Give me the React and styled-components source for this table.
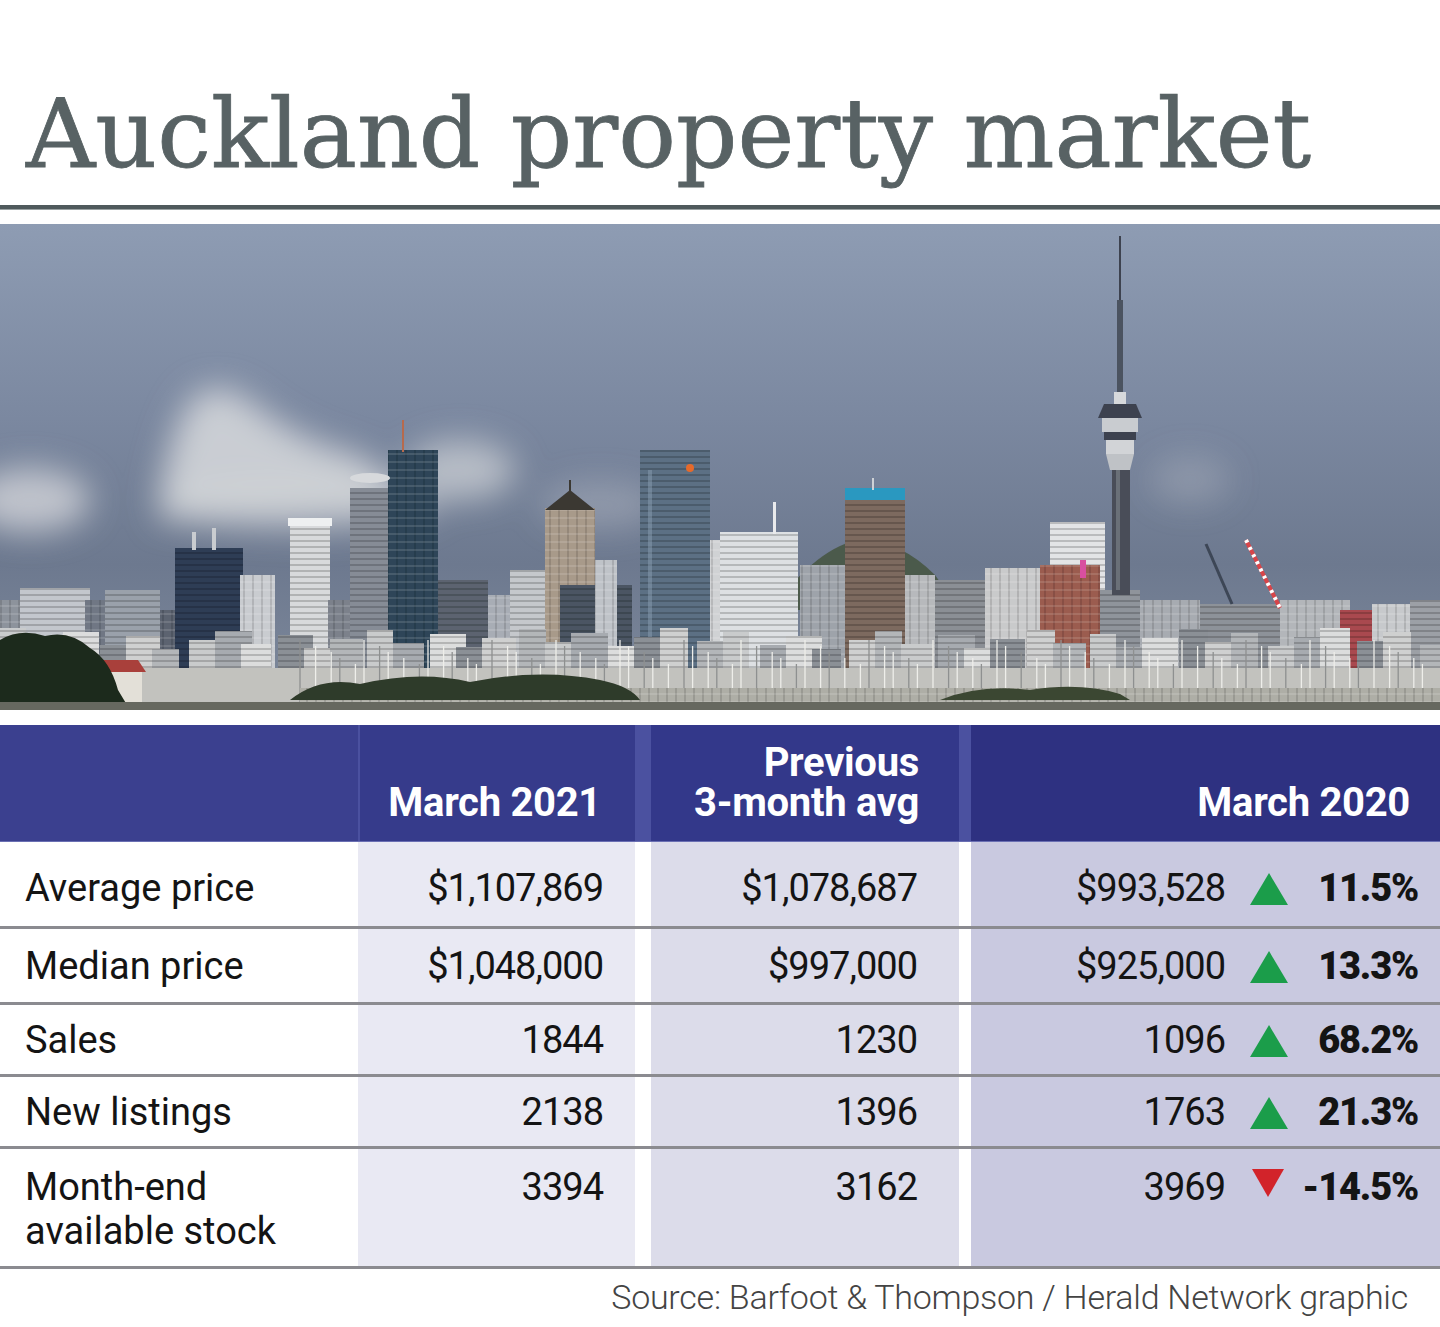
import React from 'react';
import styled, { createGlobalStyle } from 'styled-components';

const GlobalStyle = createGlobalStyle`
  html, body {
    margin: 0;
    padding: 0;
    background: #ffffff;
  }
  body {
    font-family: Roboto, "Liberation Sans", Arial, sans-serif;
    color: #111;
  }
`;

const rows = [
  { label: ['Average price'], now: '$1,107,869', avg: '$1,078,687', prev: '$993,528', change: '11.5%', up: true, height: 84, pad: 8 },
  { label: ['Median price'], now: '$1,048,000', avg: '$997,000', prev: '$925,000', change: '13.3%', up: true, height: 73, pad: 0 },
  { label: ['Sales'], now: '1844', avg: '1230', prev: '1096', change: '68.2%', up: true, height: 69, pad: 0 },
  { label: ['New listings'], now: '2138', avg: '1396', prev: '1763', change: '21.3%', up: true, height: 69, pad: 0 },
  { label: ['Month-end', 'available stock'], now: '3394', avg: '3162', prev: '3969', change: '-14.5%', up: false, height: 117, pad: 16, top: true },
];

// skyline drawing data, page coordinates (x, top, width, colour)
const towers = [
  [0, 600, 60, '#8d939c'], [20, 588, 70, '#c3c7cd'], [85, 600, 40, '#6f7784'],
  [105, 590, 55, '#9aa1ab'], [160, 610, 20, '#5b6370'], [175, 548, 68, '#2f3e55'],
  [240, 575, 35, '#c9ccd0'], [290, 522, 40, '#d8dadc'], [328, 600, 25, '#7b818b'],
  [350, 488, 38, '#868c96'], [388, 450, 50, '#2e4458'], [438, 580, 50, '#5b6470'],
  [488, 595, 30, '#a8adb5'], [510, 570, 35, '#c5c8cc'], [545, 508, 50, '#a89a8a'],
  [560, 585, 72, '#4b5563'], [595, 560, 22, '#bfc3c8'], [640, 450, 70, '#5c7084'],
  [710, 540, 14, '#d0d2d4'], [720, 532, 78, '#dde0e3'], [800, 565, 45, '#9ea3aa'],
  [845, 492, 60, '#7d6a5e'], [905, 575, 30, '#b7b9bc'], [935, 580, 50, '#8b8f95'],
  [985, 568, 55, '#c9cacb'], [1050, 522, 55, '#e3e4e6'], [1040, 565, 60, '#9b5b4f'],
  [1100, 590, 40, '#8f949b'], [1140, 600, 60, '#a7abb1'], [1200, 604, 80, '#8d9299'],
  [1280, 600, 70, '#b3b6ba'], [1340, 610, 32, '#a94a4f'], [1372, 604, 40, '#c7c9cc'],
  [1410, 600, 30, '#9ca0a6'],
];

const lowBlocks = Array.from({ length: 48 }, (_, i) => {
  const x = i * 30 + ((i * 7) % 11);
  const top = 628 + ((i * 13) % 22);
  const shades = ['#c9cbcc', '#a7abb0', '#dcdddd', '#8b9096', '#cfd0d0', '#b3b6b9'];
  return [x, top, 26 + ((i * 5) % 12), shades[i % shades.length]];
});

const masts = Array.from({ length: 90 }, (_, i) => 300 + i * 12.6 + ((i * 17) % 7));

function Skyline() {
  return (
    <svg viewBox="0 224 1440 486" width="1440" height="486" preserveAspectRatio="none">
      <defs>
        <linearGradient id="sky" x1="0" y1="0" x2="0" y2="1">
          <stop offset="0" stopColor="#8e9cb3" />
          <stop offset="0.4" stopColor="#7b88a0" />
          <stop offset="0.7" stopColor="#6d798f" />
          <stop offset="1" stopColor="#7f8a9c" />
        </linearGradient>
        <filter id="soft" x="-50%" y="-50%" width="200%" height="200%">
          <feGaussianBlur stdDeviation="16" />
        </filter>
        <filter id="haze" x="-10%" y="-10%" width="120%" height="120%">
          <feGaussianBlur stdDeviation="0.7" />
        </filter>
        <pattern id="floors" width="6" height="6" patternUnits="userSpaceOnUse">
          <rect width="6" height="2" fill="#000" fillOpacity="0.18" />
        </pattern>
        <pattern id="cols" width="9" height="8" patternUnits="userSpaceOnUse">
          <rect width="2" height="8" fill="#000" fillOpacity="0.12" />
          <rect y="5" width="9" height="2" fill="#fff" fillOpacity="0.12" />
        </pattern>
      </defs>

      <rect x="0" y="224" width="1440" height="486" fill="url(#sky)" />

      <g filter="url(#soft)" fill="#d3d5d9">
        <path d="M160 490 Q175 410 200 392 Q225 380 255 405 Q300 440 350 452 Q395 468 405 510 L160 520 Z" opacity="0.9" />
        <ellipse cx="30" cy="500" rx="60" ry="32" opacity="0.8" />
        <ellipse cx="460" cy="470" rx="55" ry="30" opacity="0.7" />
        <ellipse cx="300" cy="505" rx="140" ry="26" opacity="0.55" />
        <ellipse cx="600" cy="505" rx="60" ry="24" opacity="0.3" />
        <ellipse cx="1190" cy="480" rx="40" ry="24" opacity="0.25" />
      </g>

      <g filter="url(#haze)">
        <path d="M770 610 Q820 545 860 540 Q900 540 935 575 L960 610 Z" fill="#4c5a4c" />

        {towers.map(([x, top, w, c], i) => (
          <g key={i}>
            <rect x={x} y={top} width={w} height={700 - top} fill={c} />
            <rect x={x} y={top} width={w} height={700 - top} fill={i % 2 ? 'url(#floors)' : 'url(#cols)'} />
          </g>
        ))}

        {/* tower details */}
        <rect x="192" y="532" width="4" height="18" fill="#c9ccd0" />
        <rect x="212" y="528" width="4" height="22" fill="#c9ccd0" />
        <rect x="288" y="518" width="44" height="8" fill="#eef0f1" />
        <ellipse cx="370" cy="478" rx="20" ry="5" fill="#d7d9dc" />
        <rect x="402" y="420" width="2" height="32" fill="#b66a4e" />
        <polygon points="545,510 570,490 595,510" fill="#3b3733" />
        <rect x="569" y="480" width="2" height="14" fill="#3b3733" />
        <rect x="648" y="470" width="4" height="180" fill="#889bb0" opacity="0.5" />
        <circle cx="690" cy="468" r="4" fill="#e66a2c" />
        <rect x="845" y="488" width="60" height="12" fill="#2a98c0" />
        <rect x="872" y="478" width="2" height="12" fill="#cfd2d6" />
        <rect x="773" y="502" width="3" height="32" fill="#e9eaec" />
        <rect x="1080" y="560" width="6" height="18" fill="#d84fa0" />

        {/* sky tower */}
        <rect x="1119" y="236" width="2" height="70" fill="#3c4250" />
        <rect x="1117" y="300" width="6" height="100" fill="#4c5260" />
        <rect x="1114" y="392" width="12" height="12" fill="#d7d9dc" />
        <path d="M1104 404 L1136 404 L1142 418 L1098 418 Z" fill="#3d4350" />
        <rect x="1102" y="418" width="36" height="14" fill="#c9ccd0" />
        <rect x="1104" y="432" width="32" height="8" fill="#3d4350" />
        <rect x="1106" y="440" width="28" height="14" fill="#d2d4d7" />
        <path d="M1106 454 L1134 454 L1130 470 L1110 470 Z" fill="#bfc2c6" />
        <rect x="1112" y="470" width="18" height="125" fill="#4a4e58" />
        <rect x="1116" y="470" width="4" height="120" fill="#6b6f78" />

        {/* cranes */}
        <line x1="1206" y1="544" x2="1232" y2="604" stroke="#3d4656" strokeWidth="3" />
        <line x1="1246" y1="540" x2="1280" y2="608" stroke="#d8454a" strokeWidth="4" />
        <line x1="1246" y1="540" x2="1280" y2="608" stroke="#ffffff" strokeWidth="4" strokeDasharray="3 5" />

        {lowBlocks.map(([x, top, w, c], i) => (
          <g key={`l${i}`}>
            <rect x={x} y={top} width={w} height={700 - top} fill={c} />
            <rect x={x} y={top} width={w} height={700 - top} fill="url(#floors)" />
          </g>
        ))}

        <rect x="0" y="668" width="1440" height="42" fill="#c2c2be" />
        {masts.map((x, i) => (
          <line key={`m${i}`} x1={x} y1={640 + (i % 5) * 6} x2={x} y2="706" stroke={i % 3 ? '#eeeeea' : '#8e9090'} strokeWidth="1.3" />
        ))}
        <rect x="300" y="688" width="1140" height="22" fill="#aeaea6" />
        <rect x="300" y="688" width="1140" height="22" fill="url(#cols)" />

        <path d="M290 700 Q320 676 360 684 Q420 670 470 682 Q540 668 600 680 Q630 686 640 700 Z" fill="#2f3a2a" />
        <path d="M940 700 Q980 684 1030 690 Q1080 682 1120 694 L1130 700 Z" fill="#3b4632" />
        <rect x="90" y="670" width="52" height="38" fill="#e3e0d8" />
        <polygon points="86,672 100,660 138,660 146,672" fill="#a9413a" />
        <path d="M0 710 L0 640 Q20 628 45 636 Q70 630 90 648 Q110 660 118 690 L130 710 Z" fill="#1f2a1c" />
        <rect x="0" y="702" width="1440" height="8" fill="#66685f" />
      </g>
    </svg>
  );
}

function Triangle({ up }) {
  return (
    <TriangleMark viewBox="0 0 40 34" width="40" height="34" $up={up}>
      {up ? <polygon points="20,1 39,33 1,33" fill="#1b9d4a" /> : <polygon points="3,2 35,2 19,30" fill="#d2232a" />}
    </TriangleMark>
  );
}

export default function App() {
  return (
    <Page>
      <GlobalStyle />
      <Title>Auckland property market</Title>
      <Rule />
      <Photo>
        <Skyline />
      </Photo>
      <Table>
        <HeadRow>
          <HeadCell $tone="#3b408f" />
          <HeadCell $tone="#363b8b" $inset={2} $pad={34}>March 2021</HeadCell>
          <HeadCell $tone="#33388a" $inset={16} $pad={40}>
            <HeadLine>Previous</HeadLine>
            <HeadLine>3-month avg</HeadLine>
          </HeadCell>
          <HeadCell $tone="#2e3181" $inset={12} $pad={30}>March 2020</HeadCell>
        </HeadRow>
        {rows.map((r, i) => (
          <BodyRow key={i} $height={r.height}>
            <LabelCell $top={r.top} $pad={r.pad}>
              {r.label.map((l) => (
                <span key={l}>{l}</span>
              ))}
            </LabelCell>
            <ValueCell $tone="#e9e9f3" $right={32} $top={r.top} $pad={r.pad}>{r.now}</ValueCell>
            <ValueCell $tone="#dcdcea" $inset={16} $right={42} $top={r.top} $pad={r.pad}>{r.avg}</ValueCell>
            <ChangeCell $top={r.top} $pad={r.pad}>
              <span>{r.prev}</span>
              <Triangle up={r.up} />
              <Percent>{r.change}</Percent>
            </ChangeCell>
          </BodyRow>
        ))}
      </Table>
      <Source>Source: Barfoot &amp; Thompson / Herald Network graphic</Source>
    </Page>
  );
}

const Page = styled.div`
  width: 1440px;
  height: 1327px;
  overflow: hidden;
  background: #fff;
  display: flex;
  flex-direction: column;
`;

const Title = styled.h1`
  margin: 0;
  padding: 86px 0 0 26px;
  height: 127px;
  box-sizing: border-box;
  font-family: "DejaVu Serif", "Liberation Serif", serif;
  font-weight: 400;
  font-size: 96px;
  line-height: 1;
  letter-spacing: 0;
  -webkit-text-stroke: 0.8px #586264;
  color: #586264;
  white-space: nowrap;
`;

const Rule = styled.div`
  margin-top: 78px;
  height: 4px;
  background: #4f5a5c;
  border-bottom: 1px solid #9aa2a3;
`;

const Photo = styled.div`
  margin-top: 14px;
  height: 486px;
  line-height: 0;
  svg {
    display: block;
  }
`;

const Table = styled.div`
  margin-top: 15px;
  display: flex;
  flex-direction: column;
`;

const HeadRow = styled.div`
  display: grid;
  grid-template-columns: 358px 277px 324px 1fr;
  height: 116px;
  background: #4b51a0;
  border-bottom: 1px solid #6a6fb3;
`;

const HeadCell = styled.div`
  margin-left: ${(p) => p.$inset || 0}px;
  padding: 0 ${(p) => p.$pad || 0}px 18px 0;
  background: ${(p) => p.$tone};
  display: flex;
  flex-direction: column;
  justify-content: flex-end;
  align-items: flex-end;
  font-size: 40px;
  line-height: 40px;
  font-weight: 700;
  letter-spacing: -0.3px;
  color: #ffffff;
  text-align: right;
  white-space: nowrap;
`;

const HeadLine = styled.span`
  display: block;
  height: 40px;
`;

const BodyRow = styled.div`
  display: grid;
  grid-template-columns: 358px 277px 324px 1fr;
  height: ${(p) => p.$height}px;
  box-sizing: content-box;
  background: #fff;
  & + & {
    border-top: 3px solid #8b8b90;
  }
  &:last-child {
    border-bottom: 3px solid #8b8b90;
  }
`;

const cellText = `
  font-size: 38px;
  line-height: 44px;
  color: #141414;
`;

const LabelCell = styled.div`
  ${cellText}
  padding: ${(p) => p.$pad}px 0 0 25px;
  display: flex;
  flex-direction: column;
  justify-content: ${(p) => (p.$top ? 'flex-start' : 'center')};
`;

const ValueCell = styled.div`
  ${cellText}
  letter-spacing: -1px;
  margin-left: ${(p) => p.$inset || 0}px;
  padding: ${(p) => p.$pad}px ${(p) => p.$right}px 0 0;
  background: ${(p) => p.$tone};
  display: flex;
  justify-content: flex-end;
  align-items: ${(p) => (p.$top ? 'flex-start' : 'center')};
`;

const ChangeCell = styled.div`
  ${cellText}
  letter-spacing: -1px;
  margin-left: 12px;
  padding: ${(p) => p.$pad}px 22px 0 0;
  background: #c9c9e0;
  display: flex;
  justify-content: flex-end;
  align-items: ${(p) => (p.$top ? 'flex-start' : 'center')};
`;

const TriangleMark = styled.svg`
  margin: ${(p) => (p.$up ? '0 0 -2px 24px' : '2px 0 0 24px')};
  flex: none;
`;

const Percent = styled.span`
  width: 129px;
  text-align: right;
  font-weight: 900;
  letter-spacing: -1.2px;
`;

const Source = styled.div`
  padding: 8px 32px 0 0;
  text-align: right;
  font-size: 34px;
  font-weight: 300;
  letter-spacing: -0.25px;
  color: #444;
`;
